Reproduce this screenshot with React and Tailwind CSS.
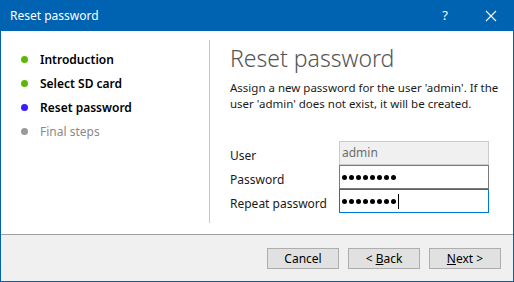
export default function App() {
  const steps = [
    { label: 'Introduction', dot: 'bg-[#5cb800]', text: 'text-black font-semibold' },
    { label: 'Select SD card', dot: 'bg-[#5cb800]', text: 'text-black font-semibold' },
    { label: 'Reset password', dot: 'bg-[#3a1cff]', text: 'text-black font-semibold' },
    { label: 'Final steps', dot: 'bg-[#999999]', text: 'text-[#8a8a8a]' },
  ];

  const dots = (
    <span className="flex gap-[2px]">
      {Array.from({ length: 8 }).map((_, i) => (
        <span key={i} className="w-[5px] h-[5px] rounded-full bg-black" />
      ))}
    </span>
  );

  return (
    <div
      className="w-[514px] h-[282px] flex flex-col border border-[#0063b1] border-t-0 bg-white text-[12px] text-[#1a1a1a] overflow-hidden"
      style={{ fontFamily: '"Noto Sans", "Open Sans", sans-serif' }}
    >
      {/* title bar */}
      <div className="h-[31px] -mx-px bg-[#0063b1] flex items-center text-white">
        <span className="pl-[10px] flex-1">Reset password</span>
        <span className="w-[46px] text-center text-[13px]">?</span>
        <span className="w-[46px] flex justify-center">
          <svg width="12" height="12" viewBox="0 0 12 12" stroke="white" strokeWidth="1.1">
            <path d="M1 1L11 11M11 1L1 11" />
          </svg>
        </span>
      </div>

      {/* body */}
      <div className="flex flex-1 min-h-0">
        <div className="w-[209px] shrink-0 pt-[11px] mt-[9px] mb-[11px] border-r border-[#c8c8c8] flex flex-col gap-[7px]">
          {steps.map((s) => (
            <div key={s.label} className="flex items-center h-[17px]">
              <span className={`ml-[20px] w-[7px] h-[7px] rounded-full ${s.dot}`} />
              <span className={`ml-[12px] ${s.text}`}>{s.label}</span>
            </div>
          ))}
        </div>

        <div className="flex-1 min-w-0 pl-[20px] pr-[20px] pt-[12px]">
          <div className="text-[23px] leading-[30px] font-light text-[#555555]">Reset password</div>
          <p className="mt-[7px] leading-[16px] text-[#1a1a1a] whitespace-nowrap text-[11.5px]">
            Assign a new password for the user 'admin'. If the
            <br />
            user 'admin' does not exist, it will be created.
          </p>

          <div className="mt-[29px] flex flex-col">
            <div className="flex items-center h-[24px]">
              <span className="w-[109px] pt-[5px]">User</span>
              <div className="w-[150px] h-[24px] bg-[#f0f0f0] border border-[#cccccc] flex items-center px-[2px] text-[#6d6d6d]">
                admin
              </div>
            </div>
            <div className="flex items-center h-[24px]">
              <span className="w-[109px] pt-[5px]">Password</span>
              <div className="w-[150px] h-[24px] bg-white border border-[#7a7a7a] flex items-center px-[2px]">
                {dots}
              </div>
            </div>
            <div className="flex items-center h-[24px]">
              <span className="w-[109px] pt-[5px]">Repeat password</span>
              <div className="w-[150px] h-[24px] bg-white border border-[#0078d7] flex items-center px-[2px]">
                {dots}
                <span className="ml-[2px] w-px h-[15px] bg-black" />
              </div>
            </div>
          </div>
        </div>
      </div>

      {/* footer */}
      <div className="h-[47px] bg-[#f0f0f0] border-t border-[#a0a0a0] flex justify-end items-start pt-[13px] pr-[12px] gap-[9px]">
        <button className="w-[72px] h-[21px] bg-[#e1e1e1] border border-[#adadad] text-black leading-none">Cancel</button>
        <button className="w-[72px] h-[21px] bg-[#e1e1e1] border border-[#adadad] text-black leading-none">
          &lt; <span className="underline">B</span>ack
        </button>
        <button className="w-[72px] h-[21px] bg-[#e1e1e1] border border-[#adadad] text-black leading-none">
          <span className="underline">N</span>ext &gt;
        </button>
      </div>
    </div>
  );
}
